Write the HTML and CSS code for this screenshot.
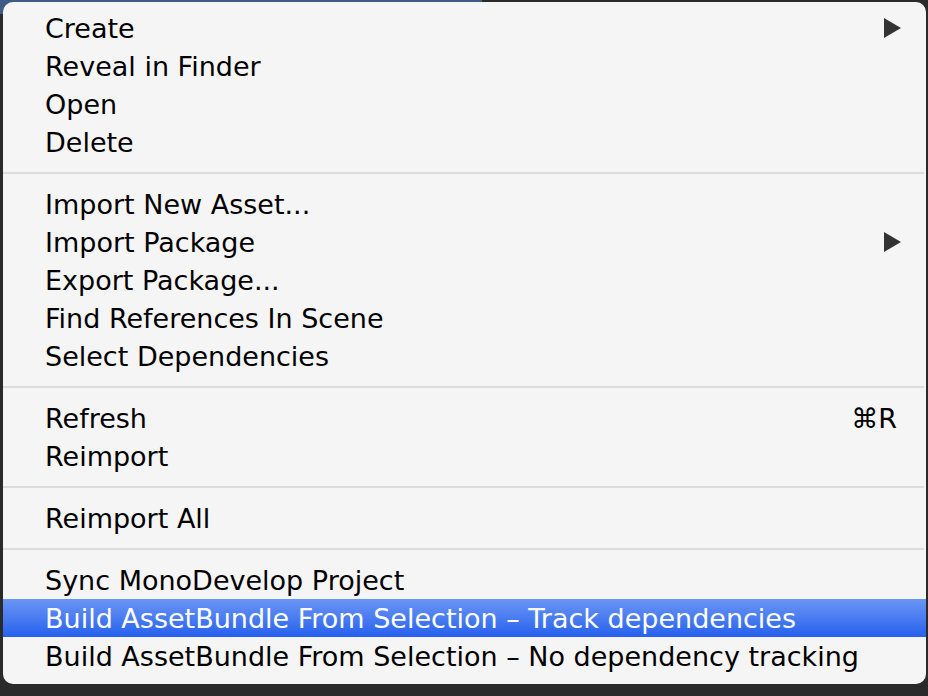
FILE: index.html
```html
<!DOCTYPE html>
<html>
<head>
<meta charset="utf-8">
<link rel="stylesheet" href="styles.css">
</head>
<body>
<div class="backdrop"></div>
<div class="menu">
  <div class="item"><span class="label">Create</span><span class="arrow"></span></div>
  <div class="item"><span class="label">Reveal in Finder</span></div>
  <div class="item"><span class="label">Open</span></div>
  <div class="item"><span class="label">Delete</span></div>
  <div class="sep"></div>
  <div class="item"><span class="label">Import New Asset...</span></div>
  <div class="item"><span class="label">Import Package</span><span class="arrow"></span></div>
  <div class="item"><span class="label">Export Package...</span></div>
  <div class="item"><span class="label">Find References In Scene</span></div>
  <div class="item"><span class="label">Select Dependencies</span></div>
  <div class="sep"></div>
  <div class="item"><span class="label">Refresh</span><span class="shortcut">⌘R</span></div>
  <div class="item"><span class="label">Reimport</span></div>
  <div class="sep"></div>
  <div class="item"><span class="label">Reimport All</span></div>
  <div class="sep"></div>
  <div class="item"><span class="label">Sync MonoDevelop Project</span></div>
  <div class="item active"><span class="label">Build AssetBundle From Selection – Track dependencies</span></div>
  <div class="item"><span class="label">Build AssetBundle From Selection – No dependency tracking</span></div>
</div>
</body>
</html>
```

FILE: styles.css
```css
html, body {
  margin: 0;
  padding: 0;
}
body {
  background: #2a2a2a;
  width: 928px;
  height: 696px;
  overflow: hidden;
  position: relative;
  font-family: "DejaVu Sans", "Liberation Sans", sans-serif;
}
.backdrop {
  position: absolute;
  left: 0;
  top: 0;
  width: 482px;
  height: 14px;
  background: #3f5b86;
}
.menu {
  position: relative;
  margin: 2px 0 0 3px;
  width: 923px;
  height: 682px;
  box-sizing: border-box;
  padding: 7px 0 9px 0;
  background: #f5f5f5;
  border-radius: 10px;
  display: flex;
  flex-direction: column;
  overflow: hidden;
}
.item {
  height: 38px;
  display: flex;
  align-items: center;
  padding: 0 25px 0 42px;
  font-size: 27px;
  color: #000;
}
.label {
  flex: 1;
  white-space: nowrap;
}
.item.active {
  background: linear-gradient(to bottom, #6a95f4 0%, #4a7cf1 50%, #2560ee 100%);
  color: #fff;
}
.arrow {
  width: 0;
  height: 0;
  border-top: 10px solid transparent;
  border-bottom: 10px solid transparent;
  border-left: 17px solid #333;
}
.shortcut {
  padding-right: 4px;
}
.sep {
  height: 24px;
  display: flex;
  align-items: center;
}
.sep::before {
  content: "";
  display: block;
  width: 100%;
  height: 2px;
  margin-right: 2px;
  background: #dcdcdc;
}
```
